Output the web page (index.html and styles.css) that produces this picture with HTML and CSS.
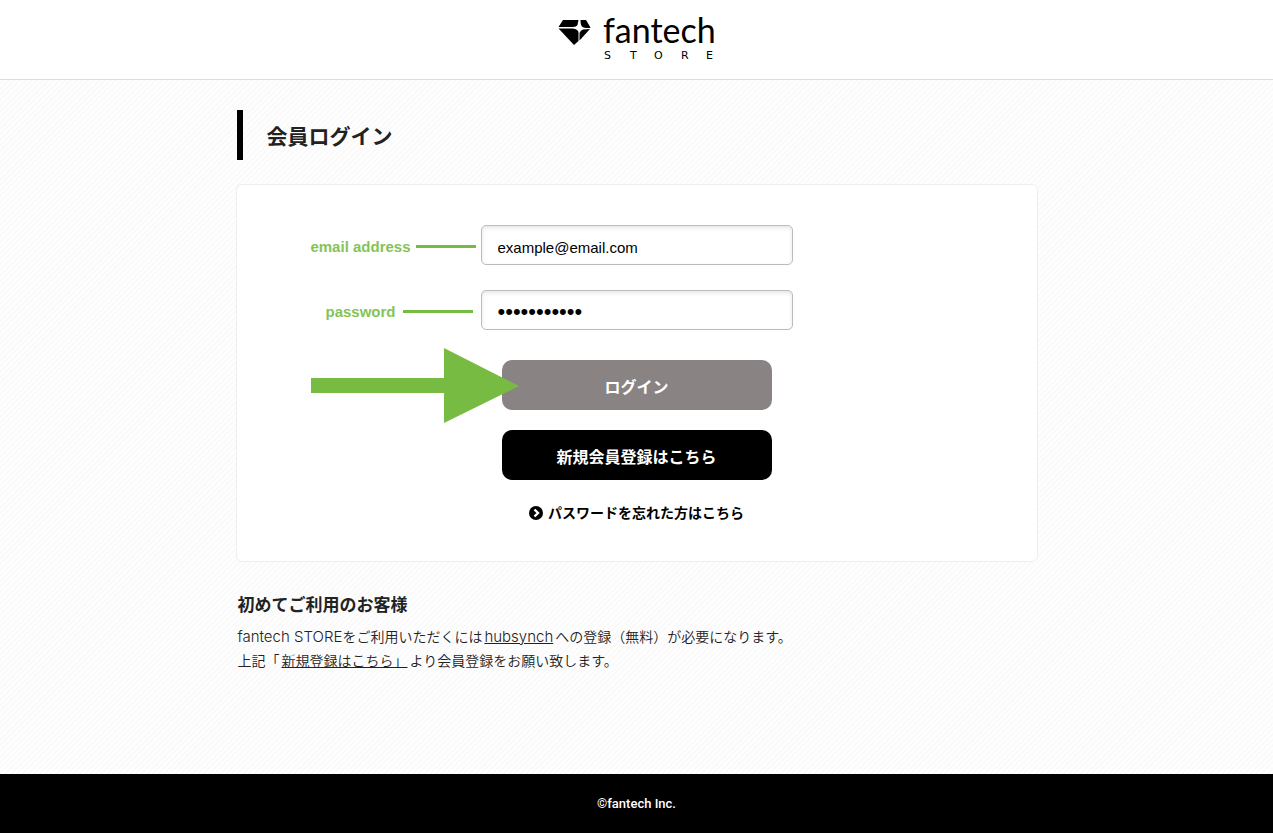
FILE: index.html
```html
<!DOCTYPE html>
<html lang="ja">
<head>
    <meta charset="UTF-8">
    <meta name="viewport" content="width=device-width, initial-scale=1.0">
    <title>会員ログイン | fantech STORE</title>
    <link rel="stylesheet" href="styles.css">
</head>
<body>
    <header class="header">
        <a href="#" class="logo">
            <svg width="159" height="60" viewBox="0 0 159 60" role="img" aria-label="fantech STORE">
                <path d="M6 10H21.500L20.500 15Q19.500 17 16 17H1.500Z"/>
                <path d="M23.500 10H29L33.500 17.500L33 18Q26 18 25 16.500Q23.500 15 23.500 10Z"/>
                <path d="M1.500 18.500H16Q20.500 19 21.500 22V31L17 35Z"/>
                <path d="M33 19L22.500 30.500V23Q23.500 20 26 19.500Z"/>
                <text class="logo-name" x="46" y="33">fantech</text>
                <text class="logo-sub" x="47 73 97 124 149" y="49">STORE</text>
            </svg>
        </a>
    </header>

    <main class="main">
        <h1 class="title">会員ログイン</h1>

        <form class="panel">
            <div class="row">
                <label class="guide" for="email">email address</label>
                <input class="field" type="text" id="email" value="example@email.com">
            </div>
            <div class="row">
                <label class="guide guide-password" for="password">password</label>
                <input class="field field-password" type="password" id="password" value="password123">
            </div>
            <div class="actions">
                <div class="login">
                    <button class="btn btn-login" type="button">ログイン</button>
                    <svg class="arrow" width="208" height="76" viewBox="0 0 208 76" aria-hidden="true">
                        <path d="M0 30H133V0L208 38L133 75V45H0Z"/>
                    </svg>
                </div>
                <button class="btn" type="button">新規会員登録はこちら</button>
                <a class="forgot" href="#">
                    <svg width="14" height="14" viewBox="0 0 14 14" aria-hidden="true">
                        <circle cx="7" cy="7" r="7"/>
                        <path d="M5.500 3.500L9 7L5.500 10.500" fill="none" stroke="#fff" stroke-width="2.400"/>
                    </svg>
                    パスワードを忘れた方はこちら
                </a>
            </div>
        </form>

        <section class="first">
            <h2>初めてご利用のお客様</h2>
            <p><span class="latin">fantech STORE</span>をご利用いただくには<a class="latin" href="#">hubsynch</a>への登録（無料）が必要になります。<br>
            上記「<a href="#">新規登録はこちら」</a>より会員登録をお願い致します。</p>
        </section>
    </main>

    <footer class="footer">©fantech Inc.</footer>
</body>
</html>
```
FILE: styles.css
```css
* {
    box-sizing: border-box;
}
body {
    margin: 0;
    min-height: 100vh;
    display: flex;
    flex-direction: column;
    font-family: "Noto Sans CJK JP", sans-serif;
    font-size: 14px;
    color: #222;
    background: #fff repeating-linear-gradient(135deg, #fefefe 0, #fefefe 2px, #fafafa 2px, #fafafa 4px);
}
.header {
    display: flex;
    justify-content: center;
    padding: 10px 0 9px;
    background: #fff;
    border-bottom: 1px solid #ddd;
}
.logo {
    display: block;
    height: 60px;
}
.logo-name {
    font-family: Lato, sans-serif;
    font-size: 34px;
}
.logo-sub {
    font-family: "DejaVu Sans", sans-serif;
    font-size: 11px;
}
.main {
    flex: 1;
    width: 100%;
    max-width: 802px;
    margin: 0 auto;
    padding: 30px 0;
}
.title {
    margin: 0 1px 24px;
    padding-left: 24px;
    border-left: 6px solid #000;
    font-size: 21px;
    font-weight: bold;
    line-height: 50px;
}
.panel {
    padding: 40px 0 36px;
    background: #fff;
    border: 1px solid #eee;
    border-radius: 6px;
}
.row {
    display: grid;
    grid-template-columns: 1fr 312px 1fr;
    align-items: center;
    margin-bottom: 25px;
}
.guide {
    display: flex;
    align-items: center;
    justify-content: flex-end;
    gap: 5px;
    padding: 3px 5px 0 0;
    font-family: "Liberation Sans", sans-serif;
    font-size: 15px;
    font-weight: bold;
    color: #84c457;
}
.guide::after {
    content: "";
    width: 60px;
    height: 3px;
    background: #78bb43;
}
.guide-password {
    gap: 7px;
    padding-right: 8px;
}
.guide-password::after {
    width: 70px;
}
.field {
    width: 100%;
    height: 40px;
    padding: 4px 16px 0;
    border: 1px solid #bbb;
    border-radius: 5px;
    box-shadow: inset 0 2px 4px rgba(0, 0, 0, 0.1);
    background: #fff;
    font-family: "Liberation Sans", sans-serif;
    font-size: 15px;
    color: #000;
}
.field-password {
    font-size: 22px;
}
.actions {
    display: flex;
    flex-direction: column;
    align-items: center;
    gap: 20px;
    padding-top: 5px;
}
.login {
    position: relative;
}
.arrow {
    position: absolute;
    left: -191px;
    top: -12px;
    fill: #78bb43;
}
.btn {
    display: block;
    width: 270px;
    height: 50px;
    padding: 2px 0 0;
    border: none;
    border-radius: 10px;
    background: #000;
    color: #fff;
    font-family: inherit;
    font-size: 16px;
    font-weight: bold;
    cursor: pointer;
}
.btn-login {
    background: #898483;
}
.forgot {
    display: flex;
    align-items: center;
    gap: 5px;
    line-height: 25px;
    font-weight: bold;
    color: #000;
    text-decoration: none;
}
.first {
    padding: 30px 2px 0;
}
.first h2 {
    margin: 0 0 8px;
    font-size: 17px;
    line-height: 24px;
}
.first p {
    margin: 0;
    font-weight: 350;
    line-height: 24px;
}
.first a {
    margin: 0 2px;
    color: #222;
}
.latin {
    font-family: Inter, sans-serif;
    font-size: 15px;
    font-weight: 300;
    line-height: 20px;
}
.footer {
    background: #000;
    color: #fff;
    text-align: center;
    font-family: Roboto, sans-serif;
    font-size: 13px;
    font-weight: 500;
    line-height: 59px;
}
```
